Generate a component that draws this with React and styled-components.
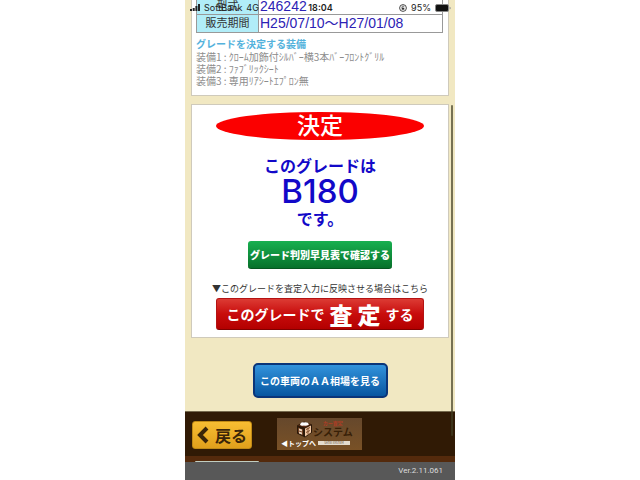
import React from 'react'
import styled, { createGlobalStyle } from 'styled-components'

const GlobalStyle = createGlobalStyle`
    * {
        box-sizing: border-box;
    }
    body {
        margin: 0;
        background-color: #ffffff;
        font-family: "Liberation Sans", "Noto Sans CJK JP", sans-serif;
    }
`;
const Phone = styled.div`
    position: relative;
    display: flex;
    flex-direction: column;
    max-width: 270px;
    min-height: 100vh;
    margin: 0 auto;
    background-color: #f1e8c2;
    overflow: hidden;
`;
const StatusBar = styled.div`
    position: absolute;
    top: 0;
    left: 0;
    right: 0;
    z-index: 2;
    display: grid;
    grid-template-columns: 1fr auto 1fr;
    align-items: center;
    height: 15px;
    padding: 0 4px 0 5px;
    color: #222222;
    font-family: Inter, sans-serif;
    font-size: 9px;
`;
const StatusGroup = styled.div`
    display: flex;
    align-items: center;
    justify-content: ${props=>props.$end?"flex-end":"flex-start"};
    gap: 4px;
`;
const Time = styled.div`
    font-size: 9px;
    font-weight: 600;
`;
const Main = styled.main`
    display: flex;
    flex-direction: column;
    gap: 8px;
    padding: 0 6px;
`;
const Panel = styled.section`
    background-color: #ffffff;
    border: 1px solid #cfcabb;
    border-top-width: ${props=>props.$cut?"0":"1px"};
    padding: ${props=>props.$cut?"0 5px 8px 4px":"7px 24px"};
`;
const SpecTable = styled.table`
    width: 100%;
    border-collapse: collapse;
    table-layout: fixed;
`;
const SpecRow = styled.tr`
    height: ${props=>props.$cut?"14px":"18px"};
    line-height: ${props=>props.$cut?"13px":"17px"};
`;
const SpecName = styled.th`
    width: 62px;
    padding: 0;
    border: 1px solid #999999;
    border-top-width: ${props=>props.$cut?"0":"1px"};
    background-color: #b1edf8;
    color: #333333;
    font-size: 11px;
    font-weight: 400;
`;
const SpecValue = styled.td`
    padding: 0 1px;
    border: 1px solid #999999;
    border-top-width: ${props=>props.$cut?"0":"1px"};
    color: #2c22b4;
    font-size: 14px;
    white-space: nowrap;
`;
const EquipTitle = styled.h2`
    margin: 6px 0 0;
    color: #54b2dc;
    font-size: 10px;
    font-weight: 700;
    line-height: 12px;
`;
const EquipList = styled.ul`
    margin: 0;
    padding: 0;
    list-style: none;
    color: #8c8c8c;
    font-family: "Noto Sans CJK JP", sans-serif;
    font-size: 10px;
    font-weight: 400;
    line-height: 12px;
    white-space: nowrap;
`;
const Decision = styled.h1`
    margin: 0;
    border-radius: 50%;
    background-color: #fb0000;
    color: #ffffff;
    font-size: 23px;
    font-weight: 500;
    line-height: 28px;
    text-align: center;
`;
const Grade = styled.p`
    margin: 15px 0 13px;
    color: #1208c8;
    font-family: "Noto Sans CJK JP", sans-serif;
    font-size: 16px;
    font-weight: 600;
    line-height: 20px;
    text-align: center;
`;
const GradeName = styled.strong`
    display: block;
    font-family: Inter, sans-serif;
    font-size: 33px;
    font-weight: 500;
    line-height: 33px;
`;
const Button = styled.button`
    display: block;
    margin: 0 auto;
    padding: 0;
    border: 0;
    border-radius: 3px;
    color: #ffffff;
    font-family: "Noto Sans CJK JP", sans-serif;
    font-weight: 700;
    white-space: nowrap;
`;
const TableButton = styled(Button)`
    width: 144px;
    height: 28px;
    border-bottom: 1px solid #05561f;
    background: linear-gradient(#18b050, #07712b);
    font-size: 10px;
    font-weight: 900;
`;
const Note = styled.p`
    margin: 14px -4px 4px;
    color: #333333;
    font-family: "Noto Sans CJK JP", sans-serif;
    font-size: 9px;
    line-height: 11px;
    text-align: center;
    white-space: nowrap;
`;
const AssessButton = styled(Button)`
    display: flex;
    align-items: center;
    justify-content: center;
    gap: 5px;
    width: 100%;
    height: 32px;
    border: 1px solid #b41313;
    border-bottom-color: #800000;
    background: linear-gradient(#dc3b34, #c80c0c 50%, #b30000);
    font-size: 14px;
`;
const AssessWord = styled.span`
    display: flex;
    gap: 5px;
    font-size: 23px;
    font-weight: 900;
    line-height: 28px;
`;
const MarketButton = styled(Button)`
    width: 135px;
    height: 35px;
    margin: 25px auto 13px;
    border: 2px solid #0a3579;
    border-radius: 5px;
    background: linear-gradient(#3293dc, #0756a0);
    font-size: 10px;
`;
const Scrollbar = styled.div`
    position: absolute;
    top: 105px;
    right: 2px;
    z-index: 1;
    width: 2px;
    height: 331px;
    border-radius: 1px;
    background-color: rgb(65 62 35 / 70%);
`;
const Footer = styled.footer`
    display: flex;
    flex: 1;
    flex-direction: column;
    background-color: #301a05;
`;
const FooterNav = styled.nav`
    display: flex;
    align-items: flex-start;
    gap: 25px;
    height: 45px;
    padding: 6px 7px 0;
    border-top: 1px solid #75694d;
`;
const BackButton = styled.button`
    display: flex;
    align-items: center;
    justify-content: center;
    gap: 6px;
    width: 60px;
    height: 28px;
    margin: 3px 0 0;
    padding: 0;
    border: 1px solid #c08a16;
    border-radius: 3px;
    background: linear-gradient(#f8bd32, #e0a01c);
    color: #3a2509;
    font-family: "Noto Sans CJK JP", sans-serif;
    font-size: 16px;
    font-weight: 700;
    line-height: 24px;
    white-space: nowrap;
`;
const TopLink = styled.a`
    display: flex;
    flex-direction: column;
    width: 85px;
    height: 32px;
    padding: 2px 4px;
    background: linear-gradient(#66482c, #795126);
    color: #ffffff;
    font-family: "Noto Sans CJK JP", sans-serif;
    text-decoration: none;
    white-space: nowrap;
`;
const LogoRow = styled.div`
    display: flex;
    padding-left: 15px;
`;
const LogoName = styled.div`
    display: flex;
    flex-direction: column;
    color: #382007;
    font-size: 10px;
    font-weight: 700;
    line-height: 13px;
`;
const LogoSmall = styled.span`
    color: #b03c25;
    font-size: 5px;
    line-height: 5px;
    text-align: center;
`;
const TopRow = styled.div`
    display: flex;
    align-items: center;
    gap: 2px;
`;
const TopText = styled.span`
    font-size: 7px;
    font-weight: 700;
    line-height: 10px;
`;
const LogoStrip = styled.span`
    width: 32px;
    background-color: #e4dccd;
    color: #58462f;
    font-size: 3px;
    line-height: 4px;
    text-align: center;
`;
const LowerTab = styled.div`
    height: 6px;
    padding: 5px 10px 0;
    background-color: #542a0c;
`;
const TabEdge = styled.div`
    width: 64px;
    height: 1px;
    border-radius: 4px 4px 0 0;
    background-color: #c1cdc0;
`;
const Version = styled.div`
    flex: 1;
    padding: 0 12px;
    background-color: #585858;
    color: #dddddd;
    font-family: Roboto, sans-serif;
    font-size: 8px;
    line-height: 18px;
    text-align: right;
`;

const equipment = [
    '装備1 : ｸﾛｰﾑ加飾付ｼﾙﾊﾞｰ横3本ﾊﾞｰﾌﾛﾝﾄｸﾞﾘﾙ',
    '装備2 : ﾌｧﾌﾞﾘｯｸｼｰﾄ',
    '装備3 : 専用ﾘｱｼｰﾄｴﾌﾟﾛﾝ無',
]

function Status() {
    return (
    <StatusBar>
        <StatusGroup>
            <svg width="10" height="8" viewBox="0 0 10 8" fill="#222222">
                <rect x="0" y="5" width="2" height="2" />
                <rect x="2.7" y="4" width="2" height="3" />
                <rect x="5.4" y="2" width="2" height="5" />
                <rect x="8" y="0" width="2" height="7" />
            </svg>
            <span>SoftBank</span>
            <span>4G</span>
        </StatusGroup>
        <Time>18:04</Time>
        <StatusGroup $end>
            <svg width="8" height="8" viewBox="0 0 8 8" fill="none" stroke="#333333">
                <circle cx="4" cy="4" r="3.4" strokeWidth="0.9" />
                <rect x="2.7" y="3.7" width="2.6" height="2" fill="#333333" stroke="none" />
                <path d="M3 4V3a1 1 0 0 1 2 0" strokeWidth="0.7" />
            </svg>
            <span>95%</span>
            <svg width="16" height="8" viewBox="0 0 16 8">
                <rect x="0.5" y="0.5" width="13" height="7" rx="1.5" fill="#111111" stroke="#888888" />
                <path d="M14.5 2.5v3q1.3-.5 1.3-1.5t-1.3-1.5" fill="#999999" />
            </svg>
        </StatusGroup>
    </StatusBar>
    )
}

function BoxIcon() {
    return (
    <svg width="17" height="18" viewBox="0 0 17 17">
        <path d="M1 5 8 1l8 3v8l-7 5-8-4z" fill="#2b1808" />
        <path d="M2 5 8 2l7 2-6 3z" fill="#5e2d14" />
        <path d="M4 4q1-3 4-2 4-1 5 2-3 2-5 1-3 1-4-1" fill="#ffffff" />
        <path d="M9 8l6-3v7l-6 4z" fill="#efc6a2" />
        <path d="M2 7l5 2v6l-5-3z" fill="#704022" />
        <path d="M3 8l3 1v2l-3-1zM3 11l3 1v2l-3-1z" fill="#ead4bf" />
        <path d="M10 9l4-2M10 12l4-2M12 7v7" stroke="#81512f" fill="none" />
    </svg>
    )
}

export default function App() {
    return (
    <>
        <GlobalStyle />
        <Phone>
            <Status />
            <Main>
                <Panel $cut>
                    <SpecTable>
                        <tbody>
                            <SpecRow $cut>
                                <SpecName $cut scope="row">型式</SpecName>
                                <SpecValue $cut>246242</SpecValue>
                            </SpecRow>
                            <SpecRow>
                                <SpecName scope="row">販売期間</SpecName>
                                <SpecValue>H25/07/10〜H27/01/08</SpecValue>
                            </SpecRow>
                        </tbody>
                    </SpecTable>
                    <EquipTitle>グレードを決定する装備</EquipTitle>
                    <EquipList>
                        {equipment.map(item=><li key={item}>{item}</li>)}
                    </EquipList>
                </Panel>
                <Panel>
                    <Decision>決定</Decision>
                    <Grade>
                        このグレードは
                        <GradeName>B180</GradeName>
                        です。
                    </Grade>
                    <TableButton type="button">グレード判別早見表で確認する</TableButton>
                    <Note>▼このグレードを査定入力に反映させる場合はこちら</Note>
                    <AssessButton type="button">
                        <span>このグレードで</span>
                        <AssessWord><span>査</span><span>定</span></AssessWord>
                        <span>する</span>
                    </AssessButton>
                </Panel>
            </Main>
            <MarketButton type="button">この車両のＡＡ相場を見る</MarketButton>
            <Scrollbar />
            <Footer>
                <FooterNav>
                    <BackButton type="button">
                        <svg width="12" height="18" viewBox="0 0 12 18">
                            <path d="M10 2 3 9l7 7" fill="none" stroke="#3a2509" strokeWidth="4" />
                        </svg>
                        戻る
                    </BackButton>
                    <TopLink href="#top">
                        <LogoRow>
                            <BoxIcon />
                            <LogoName>
                                <LogoSmall>カー査定</LogoSmall>
                                システム
                            </LogoName>
                        </LogoRow>
                        <TopRow>
                            <TopText>◀トップへ</TopText>
                            <LogoStrip>SATEI SYSTEM</LogoStrip>
                        </TopRow>
                    </TopLink>
                </FooterNav>
                <LowerTab><TabEdge /></LowerTab>
                <Version>Ver.2.11.061</Version>
            </Footer>
        </Phone>
    </>
    )
}
